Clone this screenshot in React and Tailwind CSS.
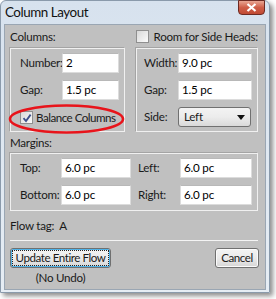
import React from "react";

const font = { fontFamily: "Lato, 'Liberation Sans', sans-serif" };

const txt = "text-[11.6px] tracking-[-0.25px] text-[#1a1a1a] leading-none whitespace-nowrap";

function TextBox({ value, w }) {
  return (
    <div
      className={`h-[20px] ${w} bg-white border border-[#dcdcdc] border-t-[#b8b8b8] flex items-center pl-[3px] text-[11.6px] tracking-[-0.2px] text-black leading-none whitespace-nowrap`}
    >
      {value}
    </div>
  );
}

function Row({ label, labelW, children, className = "" }) {
  return (
    <div className={`flex items-center ${className}`}>
      <div className={`${labelW} ${txt}`}>{label}</div>
      {children}
    </div>
  );
}

function CheckBox({ checked }) {
  return (
    <div className="w-[13px] h-[13px] shrink-0 border border-[#8f8f8f] bg-gradient-to-br from-[#d8d8d8] to-[#fbfbfb] flex items-center justify-center">
      {checked && (
        <svg width="10" height="10" viewBox="0 0 10 10">
          <path d="M1.5 5.2 L4 8 L8.6 1.6" fill="none" stroke="#3c4f8a" strokeWidth="1.8" />
        </svg>
      )}
    </div>
  );
}

function Button({ children, w, focused }) {
  return (
    <div
      className={`h-[20px] ${w} rounded-[3px] border border-[#707070] bg-gradient-to-b from-[#f4f4f4] via-[#ebebeb] to-[#d6d6d6] flex items-center justify-center p-[1px] ${
        focused ? "shadow-[inset_0_0_0_1px_#4fb3e8]" : "shadow-[inset_0_0_0_1px_#fbfbfb]"
      }`}
    >
      <div
        className={`w-full h-full flex items-center justify-center text-[11.6px] tracking-[-0.45px] text-[#1a1a1a] leading-none whitespace-nowrap ${
          focused ? "border border-dotted border-[#222]" : ""
        }`}
      >
        {children}
      </div>
    </div>
  );
}

export default function App() {
  return (
    <div className="w-[276px] h-[299px] bg-white relative" style={font}>
      <div className="w-[270px] h-[293px] flex flex-col rounded-t-[6px] bg-gradient-to-b from-[#d7e2ee] to-[#e6edf4] border border-[#8a9aab] shadow-[3px_3px_5px_rgba(0,0,0,0.45)]">
        {/* title bar */}
        <div className="h-[23px] flex items-start">
          <div className="pl-[4px] pt-[2px] text-[13.4px] tracking-[-0.45px] text-[#111] leading-[18px] whitespace-nowrap">Column Layout</div>
          <div className="ml-auto mr-[4px] mt-[-1px] w-[27px] h-[15px] rounded-b-[4px] border border-[#6d2a22] bg-gradient-to-b from-[#e8a593] via-[#cf5e48] to-[#c04a33] flex items-center justify-center">
            <svg width="11" height="9" viewBox="0 0 11 9">
              <path d="M1.5 1 L9.5 8 M9.5 1 L1.5 8" stroke="#fff" strokeWidth="2.2" />
            </svg>
          </div>
        </div>
        {/* content */}
        <div className="mx-[3px] mb-[2px] flex-1 bg-[#c0c0c0] border border-[#9aa6b3] pl-[5px] pr-[7px] flex flex-col">
          {/* header row */}
          <div className="h-[23px] flex items-center">
            <div className={`w-[127px] ${txt}`}>Columns:</div>
            <CheckBox />
            <div className={`ml-[5px] ${txt}`}>Room for Side Heads:</div>
          </div>
          {/* boxes */}
          <div className="flex gap-[11px] h-[84px]">
            <div className="relative w-[115px] h-full border border-[#f0f0f0] shadow-[-1px_-1px_0_#a4a4a4] pl-[9px] pt-[4px]">
              <Row label="Number:" labelW="w-[42px]">
                <TextBox value="2" w="w-[57px]" />
              </Row>
              <Row label="Gap:" labelW="w-[42px]" className="mt-[7px]">
                <TextBox value="1.5 pc" w="w-[57px]" />
              </Row>
              <div className="flex items-center mt-[11px]">
                <CheckBox checked />
                <div className="ml-[3px] text-[11.6px] tracking-[-0.5px] text-[#1a1a1a] leading-none whitespace-nowrap">Balance Columns</div>
              </div>
              <svg
                className="absolute left-[-2px] top-[55px] overflow-visible"
                width="115"
                height="30"
                viewBox="0 0 115 30"
              >
                <ellipse cx="57.5" cy="15" rx="56.5" ry="13.5" fill="none" stroke="#e8141b" strokeWidth="2.6" />
              </svg>
            </div>
            <div className="w-[122px] h-full border border-[#f0f0f0] shadow-[-1px_-1px_0_#a4a4a4] pl-[7px] pt-[4px]">
              <Row label="Width:" labelW="w-[34px]">
                <TextBox value="9.0 pc" w="w-[74px]" />
              </Row>
              <Row label="Gap:" labelW="w-[34px]" className="mt-[7px]">
                <TextBox value="1.5 pc" w="w-[74px]" />
              </Row>
              <div className="flex items-center mt-[7px]">
                <div className={`w-[34px] ${txt}`}>Side:</div>
                <div className={`w-[73px] h-[20px] rounded-[3px] border border-[#707070] bg-gradient-to-b from-[#f3f3f3] via-[#ececec] to-[#d9d9d9] flex items-center pl-[5px] pr-[5px] ${txt}`}>
                  <span>Left</span>
                  <svg className="ml-auto" width="8" height="5" viewBox="0 0 8 5">
                    <path d="M0 0 H8 L4 5 Z" fill="#111" />
                  </svg>
                </div>
              </div>
            </div>
          </div>
          {/* margins */}
          <div className={`h-[21px] flex items-center ${txt}`}>Margins:</div>
          <div className="h-[58px] w-[248px] border border-[#f0f0f0] shadow-[-1px_-1px_0_#a4a4a4] pt-[4px] pl-[9px] flex flex-col gap-[7px]">
            <div className="flex">
              <Row label="Top:" labelW="w-[41px]">
                <TextBox value="6.0 pc" w="w-[70px]" />
              </Row>
              <Row label="Left:" labelW="w-[42px]" className="ml-[7px]">
                <TextBox value="6.0 pc" w="w-[72px]" />
              </Row>
            </div>
            <div className="flex">
              <Row label="Bottom:" labelW="w-[41px]">
                <TextBox value="6.0 pc" w="w-[70px]" />
              </Row>
              <Row label="Right:" labelW="w-[42px]" className="ml-[7px]">
                <TextBox value="6.0 pc" w="w-[72px]" />
              </Row>
            </div>
          </div>
          <div className={`h-[29px] flex items-center ${txt}`}>Flow tag:&nbsp; A</div>
          <div className="w-[248px] h-[1px] bg-[#f4f4f4]" />
          <div className="flex items-start justify-between w-[249px] mt-[7px]">
            <div className="flex flex-col items-center">
              <Button w="w-[101px]" focused>Update Entire Flow</Button>
              <div className={`mt-[4px] ${txt}`}>(No Undo)</div>
            </div>
            <Button w="w-[44px]">Cancel</Button>
          </div>
        </div>
      </div>
    </div>
  );
}
